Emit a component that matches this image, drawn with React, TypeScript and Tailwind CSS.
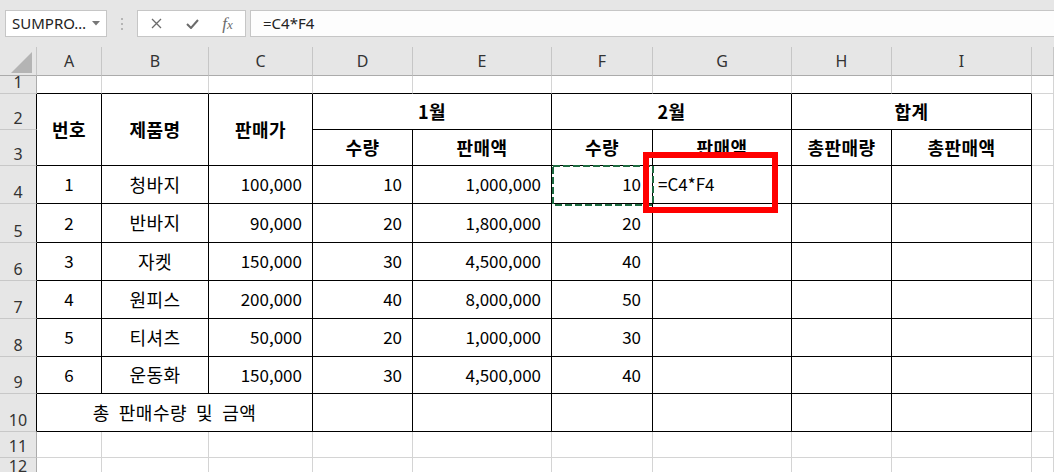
import React from "react";

const rows = [
    ["1", "청바지", "100,000", "10", "1,000,000", "10"],
    ["2", "반바지", "90,000", "20", "1,800,000", "20"],
    ["3", "자켓", "150,000", "30", "4,500,000", "40"],
    ["4", "원피스", "200,000", "40", "8,000,000", "50"],
    ["5", "티셔츠", "50,000", "20", "1,000,000", "30"],
    ["6", "운동화", "150,000", "30", "4,500,000", "40"],
];

const colLetters = ["A", "B", "C", "D", "E", "F", "G", "H", "I", ""];

const cellBox = "flex items-center pb-[2px] leading-none text-black border-r border-b border-black bg-white";
const tcell = cellBox + " text-[17px]";
const kcell = cellBox + " text-[18px] tracking-[0.5px]";
const gcell = "border-r border-b border-[#d4d4d4] bg-white";
const topCell = "border-r border-b border-r-[#d4d4d4] border-b-black bg-white";
const rhBase =
    "flex items-end justify-center pb-[3px] border-r border-b border-b-[#c8c8c8] bg-[#e6e6e6] font-['Noto_Sans',sans-serif] text-[16px] leading-none text-[#333]";
const rhGrey = rhBase + " border-r-[#ababab]";
const rhDark = rhBase + " border-r-black";

function RowHead({ n, dark }: { n: number; dark?: boolean }) {
    return <div className={dark ? rhDark : rhGrey}>{n}</div>;
}

export default function App() {
    return (
        <div className="relative h-[472px] w-[1054px] overflow-hidden bg-[#e6e6e6] font-['Noto_Sans_CJK_KR','Noto_Sans',sans-serif]">
            {/* formula bar */}
            <div className="flex h-[47px] items-start pt-[10px] font-['Noto_Sans',sans-serif]">
                <div className="ml-[5px] flex h-[27px] w-[102px] items-center justify-between border border-[#c6c6c6] bg-white pl-[6px] pr-[6px]">
                    <span className="text-[15px] leading-none text-[#222]">SUMPRO…</span>
                    <svg width="8" height="5" viewBox="0 0 8 5">
                        <polygon points="0,0 8,0 4,4.5" fill="#777" />
                    </svg>
                </div>
                <div className="flex h-[27px] w-[30px] flex-col items-center justify-center gap-[3px]">
                    <span className="h-[2px] w-[2px] bg-[#b5b5b5]" />
                    <span className="h-[2px] w-[2px] bg-[#b5b5b5]" />
                    <span className="h-[2px] w-[2px] bg-[#b5b5b5]" />
                </div>
                <div className="flex h-[27px] w-[109px] items-center border border-[#c6c6c6] bg-white">
                    <div className="flex w-[36px] justify-center">
                        <svg width="11" height="11" viewBox="0 0 11 11">
                            <path d="M1 1 L10 10 M10 1 L1 10" stroke="#6b6b6b" strokeWidth="1.3" />
                        </svg>
                    </div>
                    <div className="flex w-[36px] justify-center">
                        <svg width="13" height="10" viewBox="0 0 13 10">
                            <path d="M1 5 L5 9 L12 1" stroke="#6b6b6b" strokeWidth="2" fill="none" />
                        </svg>
                    </div>
                    <div className="flex w-[35px] justify-center">
                        <span className="font-['Liberation_Serif',serif] text-[17px] italic leading-none text-[#6b6b6b]">
                            f<span className="text-[13px]">x</span>
                        </span>
                    </div>
                </div>
                <div className="ml-[4px] flex h-[27px] flex-1 items-center border border-r-0 border-[#c6c6c6] bg-[#fdfdfd] pl-[12px] text-[15px] leading-none text-[#222]">
                    =C4*F4
                </div>
            </div>

            {/* sheet grid */}
            <div className="grid h-[425px] grid-cols-[37px_65px_107px_104px_100px_139px_101px_139px_100px_140px_1fr] grid-rows-[29px_18px_36px_36px_38px_39px_38px_38px_38px_37px_38px_26px_1fr]">
                {/* column headers */}
                <div className="flex items-end justify-end border-r border-b border-r-[#c6c6c6] border-b-[#ababab] pb-[2px] pr-[4px]">
                    <svg width="21" height="21" viewBox="0 0 21 21">
                        <polygon points="21,0 21,21 0,21" fill="#b4b4b4" />
                    </svg>
                </div>
                {colLetters.map((c, i) => (
                    <div
                        key={i}
                        className="flex items-center justify-center border-r border-b border-r-[#c6c6c6] border-b-[#ababab] font-['Noto_Sans',sans-serif] text-[16px] leading-none text-[#333]"
                    >
                        {c}
                    </div>
                ))}

                {/* row 1 */}
                <RowHead n={1} />
                {[0, 1, 2, 3, 4, 5, 6, 7, 8].map((i) => (
                    <div key={i} className={topCell} />
                ))}
                <div className={gcell} />

                {/* row 2 */}
                <RowHead n={2} dark />
                <div className={kcell + " row-span-2 justify-center font-bold"}>번호</div>
                <div className={kcell + " row-span-2 justify-center font-bold"}>제품명</div>
                <div className={kcell + " row-span-2 justify-center font-bold"}>판매가</div>
                <div className={kcell + " col-span-2 justify-center font-bold"}>1월</div>
                <div className={kcell + " col-span-2 justify-center font-bold"}>2월</div>
                <div className={kcell + " col-span-2 justify-center font-bold"}>합계</div>
                <div className={gcell} />

                {/* row 3 */}
                <RowHead n={3} dark />
                <div className={kcell + " justify-center font-bold"}>수량</div>
                <div className={kcell + " justify-center font-bold"}>판매액</div>
                <div className={kcell + " justify-center font-bold"}>수량</div>
                <div className={kcell + " justify-center font-bold"}>판매액</div>
                <div className={kcell + " justify-center font-bold"}>총판매량</div>
                <div className={kcell + " justify-center font-bold"}>총판매액</div>
                <div className={gcell} />

                {/* data rows */}
                {rows.map((r, i) => (
                    <React.Fragment key={i}>
                        <RowHead n={i + 4} dark />
                        <div className={tcell + " justify-center"}>{r[0]}</div>
                        <div className={kcell + " justify-center"}>{r[1]}</div>
                        <div className={tcell + " justify-end pr-[10px]"}>{r[2]}</div>
                        <div className={tcell + " justify-end pr-[10px]"}>{r[3]}</div>
                        <div className={tcell + " justify-end pr-[10px]"}>{r[4]}</div>
                        <div className={tcell + " justify-end pr-[11px]"}>{r[5]}</div>
                        <div className={tcell + " pl-[5px]"}>{i === 0 ? "=C4*F4" : ""}</div>
                        <div className={tcell} />
                        <div className={tcell} />
                        <div className={gcell} />
                    </React.Fragment>
                ))}

                {/* row 10 */}
                <RowHead n={10} dark />
                <div className={kcell + " col-span-3 justify-center whitespace-pre"}>총  판매수량  및  금액</div>
                <div className={tcell} />
                <div className={tcell} />
                <div className={tcell} />
                <div className={tcell} />
                <div className={tcell} />
                <div className={tcell} />
                <div className={gcell} />

                {/* rows 11-12 */}
                {[11, 12].map((n) => (
                    <React.Fragment key={n}>
                        <RowHead n={n} />
                        {[0, 1, 2, 3, 4, 5, 6, 7, 8, 9].map((i) => (
                            <div key={i} className={gcell} />
                        ))}
                    </React.Fragment>
                ))}
            </div>

            {/* copy marquee around F4 */}
            <svg className="absolute left-[552px] top-[165px]" width="102" height="41" viewBox="0 0 102 41">
                <rect x="1" y="1" width="100" height="39" fill="none" stroke="#1e6b41" strokeWidth="2" strokeDasharray="7 3" />
            </svg>

            {/* red highlight box */}
            <div className="absolute left-[643px] top-[152px] h-[61px] w-[135px] border-[6px] border-[#ff0000]" />
        </div>
    );
}
